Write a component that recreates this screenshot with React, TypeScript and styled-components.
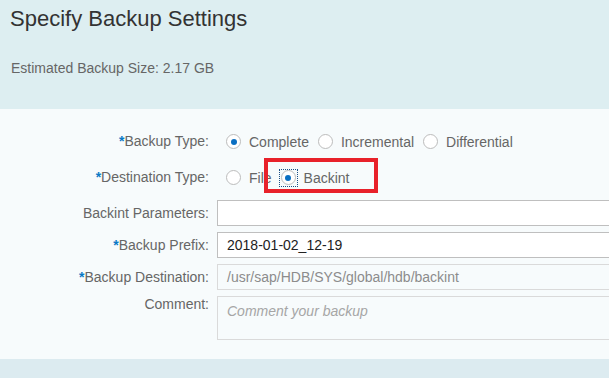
import React from "react";
import styled, { createGlobalStyle } from "styled-components";

const Global = createGlobalStyle`
  html, body { margin: 0; padding: 0; }
  body {
    width: 609px;
    height: 378px;
    overflow: hidden;
    background: #dcebf0;
    font-family: "Liberation Sans", Arial, sans-serif;
  }
`;

const Page = styled.div`
  width: 609px;
  height: 378px;
  display: flex;
  flex-direction: column;
  overflow: hidden;
`;

const Header = styled.header`
  height: 109px;
  box-sizing: border-box;
  background: #ddeef1;
  padding: 7px 0 0 10px;
  display: flex;
  flex-direction: column;
`;

const Title = styled.h1`
  margin: 0;
  font-size: 22px;
  line-height: 24px;
  font-weight: normal;
  color: #333333;
`;

const SizeInfo = styled.div`
  margin-top: 29px;
  padding-left: 1px;
  font-size: 14px;
  line-height: 16px;
  color: #666666;
`;

const Form = styled.section`
  background: #f7fbfc;
  padding: 14px 0 19px 0;
  display: flex;
  flex-direction: column;
`;

const Row = styled.div<{ $h: number; $mt?: number; $top?: boolean }>`
  display: grid;
  grid-template-columns: 209px 420px;
  column-gap: 8px;
  height: ${(p) => p.$h}px;
  margin-top: ${(p) => p.$mt ?? 0}px;
  align-items: ${(p) => (p.$top ? "start" : "center")};
`;

const Label = styled.label`
  text-align: right;
  font-size: 14px;
  line-height: 16px;
  color: #666666;
  white-space: nowrap;
`;

const Req = styled.span`
  color: #0a79c6;
  font-weight: bold;
  font-size: 14px;
`;

const RadioGroup = styled.div`
  display: flex;
  align-items: center;
  padding-left: 9px;
  padding-top: 1px;
`;

const Option = styled.span`
  position: relative;
  display: inline-flex;
  align-items: center;
  height: 16px;
  margin-right: 9px;
  font-size: 14px;
  color: #666666;
`;

const Circle = styled.span<{ $checked?: boolean }>`
  position: relative;
  display: block;
  box-sizing: border-box;
  width: 15px;
  height: 15px;
  min-width: 15px;
  border-radius: 50%;
  border: 1px solid #bcbcbc;
  background: #ffffff;
  margin-right: 8px;
  &::after {
    content: "";
    display: ${(p) => (p.$checked ? "block" : "none")};
    position: absolute;
    left: 3.5px;
    top: 3.5px;
    width: 6px;
    height: 6px;
    border-radius: 50%;
    background: #0a6fc2;
  }
`;

const FocusFrame = styled.span`
  position: absolute;
  left: -2px;
  top: -1px;
  width: 19px;
  height: 18px;
  box-sizing: border-box;
  border: 1px dotted #1a4f86;
  pointer-events: none;
`;

const Highlight = styled.span`
  position: absolute;
  left: -17px;
  top: -12px;
  width: 114px;
  height: 35px;
  box-sizing: border-box;
  border: 4px solid #e8212a;
  pointer-events: none;
`;

const Field = styled.div<{ $ro?: boolean; $h?: number }>`
  box-sizing: border-box;
  height: ${(p) => p.$h ?? 26}px;
  border: 1px solid ${(p) => (p.$ro ? "#dadada" : "#bfbfbf")};
  background: ${(p) => (p.$ro ? "#f7fbfc" : "#ffffff")};
  padding: ${(p) => (p.$h ? "6px 9px" : "0 9px")};
  display: flex;
  align-items: ${(p) => (p.$h ? "flex-start" : "center")};
  font-size: 14px;
  color: ${(p) => (p.$ro ? "#8c8c8c" : "#222222")};
`;

const Placeholder = styled.span`
  font-style: italic;
  color: #a6a6a6;
`;

type RadioProps = { label: string; checked?: boolean; focus?: boolean; marked?: boolean };

const Radio = ({ label, checked, focus, marked }: RadioProps) => (
  <Option>
    <Circle $checked={checked} />
    {focus && <FocusFrame />}
    {label}
    {marked && <Highlight />}
  </Option>
);

export default function App() {
  return (
    <>
      <Global />
      <Page>
        <Header>
          <Title>Specify Backup Settings</Title>
          <SizeInfo>Estimated Backup Size: 2.17 GB</SizeInfo>
        </Header>
        <Form>
          <Row $h={36}>
            <Label><Req>*</Req>Backup Type:</Label>
            <RadioGroup>
              <Radio label="Complete" checked />
              <Radio label="Incremental" />
              <Radio label="Differential" />
            </RadioGroup>
          </Row>
          <Row $h={36}>
            <Label><Req>*</Req>Destination Type:</Label>
            <RadioGroup>
              <Radio label="File" />
              <Radio label="Backint" checked focus marked />
            </RadioGroup>
          </Row>
          <Row $h={26} $mt={5}>
            <Label>Backint Parameters:</Label>
            <Field />
          </Row>
          <Row $h={26} $mt={6}>
            <Label><Req>*</Req>Backup Prefix:</Label>
            <Field>2018-01-02_12-19</Field>
          </Row>
          <Row $h={26} $mt={6}>
            <Label><Req>*</Req>Backup Destination:</Label>
            <Field $ro>/usr/sap/HDB/SYS/global/hdb/backint</Field>
          </Row>
          <Row $h={44} $mt={6} $top>
            <Label>Comment:</Label>
            <Field $ro $h={44}>
              <Placeholder>Comment your backup</Placeholder>
            </Field>
          </Row>
        </Form>
      </Page>
    </>
  );
}
